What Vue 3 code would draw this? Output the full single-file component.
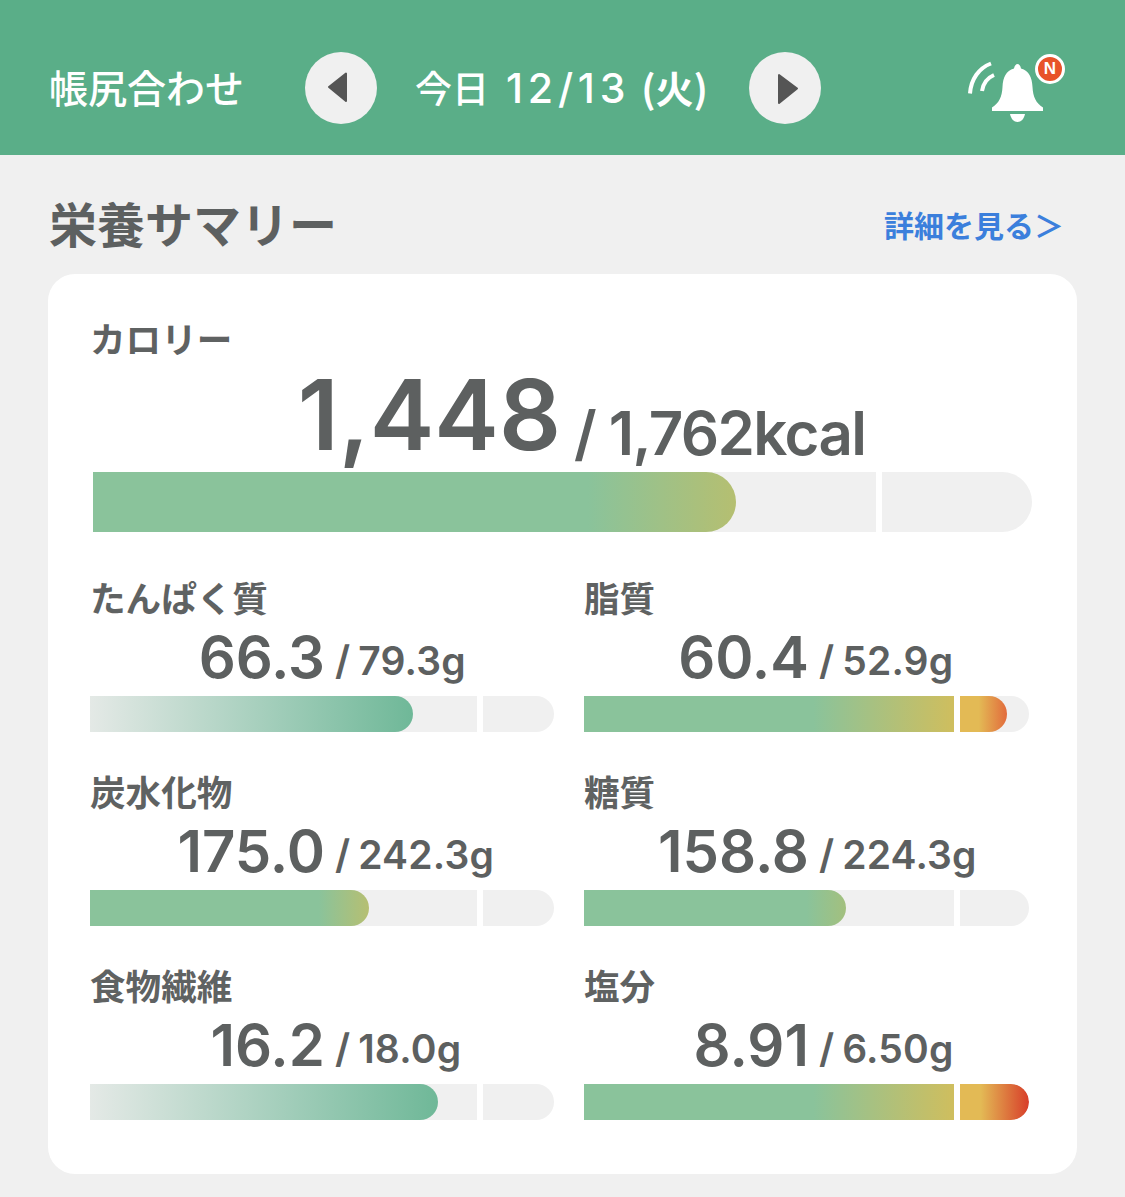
<script setup>
const GREEN = '#8ac39b'
const rows = [
  { label: 'たんぱく質', value: '66.3', goal: '79.3g', vw: 235,
    seg1: { w: 83.5, bg: 'linear-gradient(90deg,#e4e9e6 0%,#6fb898 100%)', end: true }, seg2: { w: 0 } },
  { label: '脂質', value: '60.4', goal: '52.9g', vw: 225,
    seg1: { w: 100, bg: `linear-gradient(90deg,${GREEN} 62%,#cfbe5e 100%)` },
    seg2: { w: 68, bg: 'linear-gradient(90deg,#e3ba55 40%,#e26b3c 100%)', end: true } },
  { label: '炭水化物', value: '175.0', goal: '242.3g', vw: 235,
    seg1: { w: 72.1, bg: `linear-gradient(90deg,${GREEN} 82%,#b6bf72 100%)`, end: true }, seg2: { w: 0 } },
  { label: '糖質', value: '158.8', goal: '224.3g', vw: 225,
    seg1: { w: 70.8, bg: `linear-gradient(90deg,${GREEN} 85%,#a3c07e 100%)`, end: true }, seg2: { w: 0 } },
  { label: '食物繊維', value: '16.2', goal: '18.0g', vw: 235,
    seg1: { w: 89.9, bg: 'linear-gradient(90deg,#e4e9e6 0%,#6fb898 100%)', end: true }, seg2: { w: 0 } },
  { label: '塩分', value: '8.91', goal: '6.50g', vw: 225,
    seg1: { w: 100, bg: `linear-gradient(90deg,${GREEN} 62%,#cfbe5e 100%)` },
    seg2: { w: 100, bg: 'linear-gradient(90deg,#e3ba55 30%,#d83e2a 100%)', end: true } }
]
</script>

<template>
  <div class="page">
    <header class="top">
      <h1 class="title">帳尻合わせ</h1>
      <button class="nav">
        <svg width="72" height="72" viewBox="0 0 72 72"><path d="M41 21.5V49L24 35Z" fill="#555" stroke="#555" stroke-width="2" stroke-linejoin="round"/></svg>
      </button>
      <div class="date"><span class="jp">今日</span><span class="num">12/13</span><span class="paren">(火)</span></div>
      <button class="nav">
        <svg width="72" height="72" viewBox="0 0 72 72"><path d="M30 23V51L48 36.5Z" fill="#555" stroke="#555" stroke-width="2" stroke-linejoin="round"/></svg>
      </button>
      <div class="bell">
        <svg width="100" height="75" viewBox="0 0 100 75" fill="#fff">
          <path d="M27 60V56.5C34 52 37 46 37.5 36C38 26 41 20 49 17.5C49.5 14.5 51 13 52.5 13C54 13 55.5 14.5 56 17.5C64 20 67 26 67.5 36C68 46 71 52 78 56.5V60Z"/>
          <path d="M45 63H60C59 68 56 71 52.5 71C49 71 46 68 45 63Z"/>
          <path d="M5 42.5C6 28 14 17 26 12.5" fill="none" stroke="#fff" stroke-width="4"/>
          <path d="M17 40C18 33 22 27 29 24" fill="none" stroke="#fff" stroke-width="4"/>
        </svg>
        <span class="badge">N</span>
      </div>
    </header>

    <main class="body">
      <div class="heading">
        <h2>栄養サマリー</h2>
        <a class="more">詳細を見る<span class="chev">＞</span></a>
      </div>
      <section class="card">
        <div class="cal">
          <div class="label">カロリー</div>
          <div class="cal-val">
            <span class="cal-big">1,448</span>
            <span class="cal-rest"><span class="cal-slash">/</span><span class="cal-goal">1,762kcal</span></span>
          </div>
          <div class="bar cal-bar">
            <div class="seg cal-s1"><div class="fill end cal-fill"></div></div>
            <div class="seg cal-s2"></div>
          </div>
        </div>
        <div class="grid">
          <div v-for="r in rows" :key="r.label" class="item">
            <div class="label">{{ r.label }}</div>
            <div class="val">
              <span class="big" :style="{ width: r.vw + 'px' }">{{ r.value }}</span>
              <span class="rest"><span class="slash">/</span><span class="goal">{{ r.goal }}</span></span>
            </div>
            <div class="bar small">
              <div class="seg s1">
                <div class="fill" :class="{ end: r.seg1.end }" :style="{ width: r.seg1.w + '%', background: r.seg1.bg }"></div>
              </div>
              <div class="seg s2">
                <div v-if="r.seg2.w" class="fill end" :style="{ width: r.seg2.w + '%', background: r.seg2.bg }"></div>
              </div>
            </div>
          </div>
        </div>
      </section>
    </main>
  </div>
</template>

<style>
html, body { margin: 0; background: #f0f0f0; }
</style>

<style scoped>
.page {
  width: 1125px;
  height: 1197px;
  background: #f0f0f0;
  overflow: hidden;
  font-family: "Noto Sans CJK JP", "Liberation Sans", sans-serif;
}
.top {
  height: 155px;
  background: #5aae88;
  display: flex;
  align-items: center;
  padding: 21px 0 0 49px;
  box-sizing: border-box;
  color: #fff;
}
.title {
  margin: 0 0 4px;
  width: 256px;
  font-size: 39px;
  font-weight: 500;
  line-height: 1;
}
.nav {
  width: 72px;
  height: 72px;
  border: 0;
  padding: 0;
  border-radius: 50%;
  background: #f0f0f0;
  display: block;
  flex: none;
}
.nav svg { display: block; }
.date {
  width: 372px;
  box-sizing: border-box;
  padding-left: 38px;
  display: flex;
  align-items: baseline;
  line-height: 1;
  white-space: nowrap;
}
.date .jp { font-weight: 500; font-size: 37px; }
.date .num {
  margin-left: 17px;
  font-family: "Inter", sans-serif;
  font-size: 41px;
  font-weight: 500;
  letter-spacing: 4.8px;
}
.date .paren { margin-left: 11px; font-size: 38px; font-weight: 700; }
.bell {
  position: relative;
  margin-left: 144px;
  width: 100px;
  height: 75px;
}
.bell svg { display: block; }
.badge {
  position: absolute;
  left: 70px;
  top: 3px;
  width: 30px;
  height: 30px;
  box-sizing: border-box;
  border: 3px solid #fff;
  border-radius: 50%;
  background: #e8532a;
  color: #fff;
  font: 700 17px/24px "Liberation Sans", sans-serif;
  text-align: center;
}
.body { padding: 0 48px; }
.heading {
  height: 119px;
  display: flex;
  justify-content: space-between;
  align-items: center;
  padding: 15px 13px 0 1px;
  box-sizing: border-box;
}
.heading h2 {
  margin: 0;
  font-size: 48px;
  font-weight: 700;
  color: #5d6060;
  line-height: 1;
}
.more {
  margin-top: 3px;
  font-size: 30px;
  font-weight: 700;
  color: #3b7fdc;
  line-height: 1;
  white-space: nowrap;
}
.card {
  height: 900px;
  box-sizing: border-box;
  background: #fff;
  border-radius: 27px;
  padding: 44px 0 0 42px;
}
.label {
  font-size: 35.6px;
  line-height: 40px;
  font-weight: 700;
  color: #5f6262;
}
.item .label { margin-top: -1px; margin-bottom: 1px; }
.cal-val {
  height: 114px;
  line-height: 114px;
  color: #5d6060;
  font-family: "Inter", sans-serif;
  font-weight: 600;
  white-space: nowrap;
}
.cal-big {
  display: inline-block;
  width: 471px;
  text-align: right;
  font-size: 97px;
}
.cal-rest {
  display: inline-block;
  vertical-align: -5px;
  line-height: 1;
}
.cal-slash { margin-left: 13px; font-size: 60px; }
.cal-goal {
  margin-left: 12px;
  font-size: 60px;
  letter-spacing: -1.6px;
}
.bar { display: flex; }
.seg {
  background: #f0f0f0;
  overflow: hidden;
  height: 100%;
}
.fill { height: 100%; }
.fill.end { border-radius: 0 30px 30px 0; }
.cal-bar { height: 60px; margin-left: 3px; width: 939px; gap: 6px; }
.cal-s1 { width: 783px; }
.cal-s2 { width: 150px; border-radius: 0 30px 30px 0; }
.cal-fill {
  width: 643px;
  background: linear-gradient(90deg, #8ac39b 77%, #b5bf71 100%);
}
.grid {
  display: grid;
  grid-template-columns: 464px 445px;
  column-gap: 30px;
  margin-top: 46px;
  row-gap: 32px;
}
.item { height: 162px; }
.val {
  height: 78px;
  line-height: 78px;
  color: #5d6060;
  font-family: "Inter", sans-serif;
  font-weight: 600;
  white-space: nowrap;
}
.big {
  display: inline-block;
  text-align: right;
  font-size: 58px;
}
.rest {
  display: inline-block;
  vertical-align: 3px;
  line-height: 1;
}
.slash { margin-left: 10px; font-size: 40px; }
.goal {
  margin-left: 8px;
  font-size: 39px;
  letter-spacing: 0.2px;
}
.small { height: 36px; gap: 6px; }
.small .s1 { flex: 1; }
.small .s2 { border-radius: 0 18px 18px 0; }
.item:nth-child(odd) .s2 { width: 71px; }
.item:nth-child(even) .s2 { width: 69px; }
</style>
